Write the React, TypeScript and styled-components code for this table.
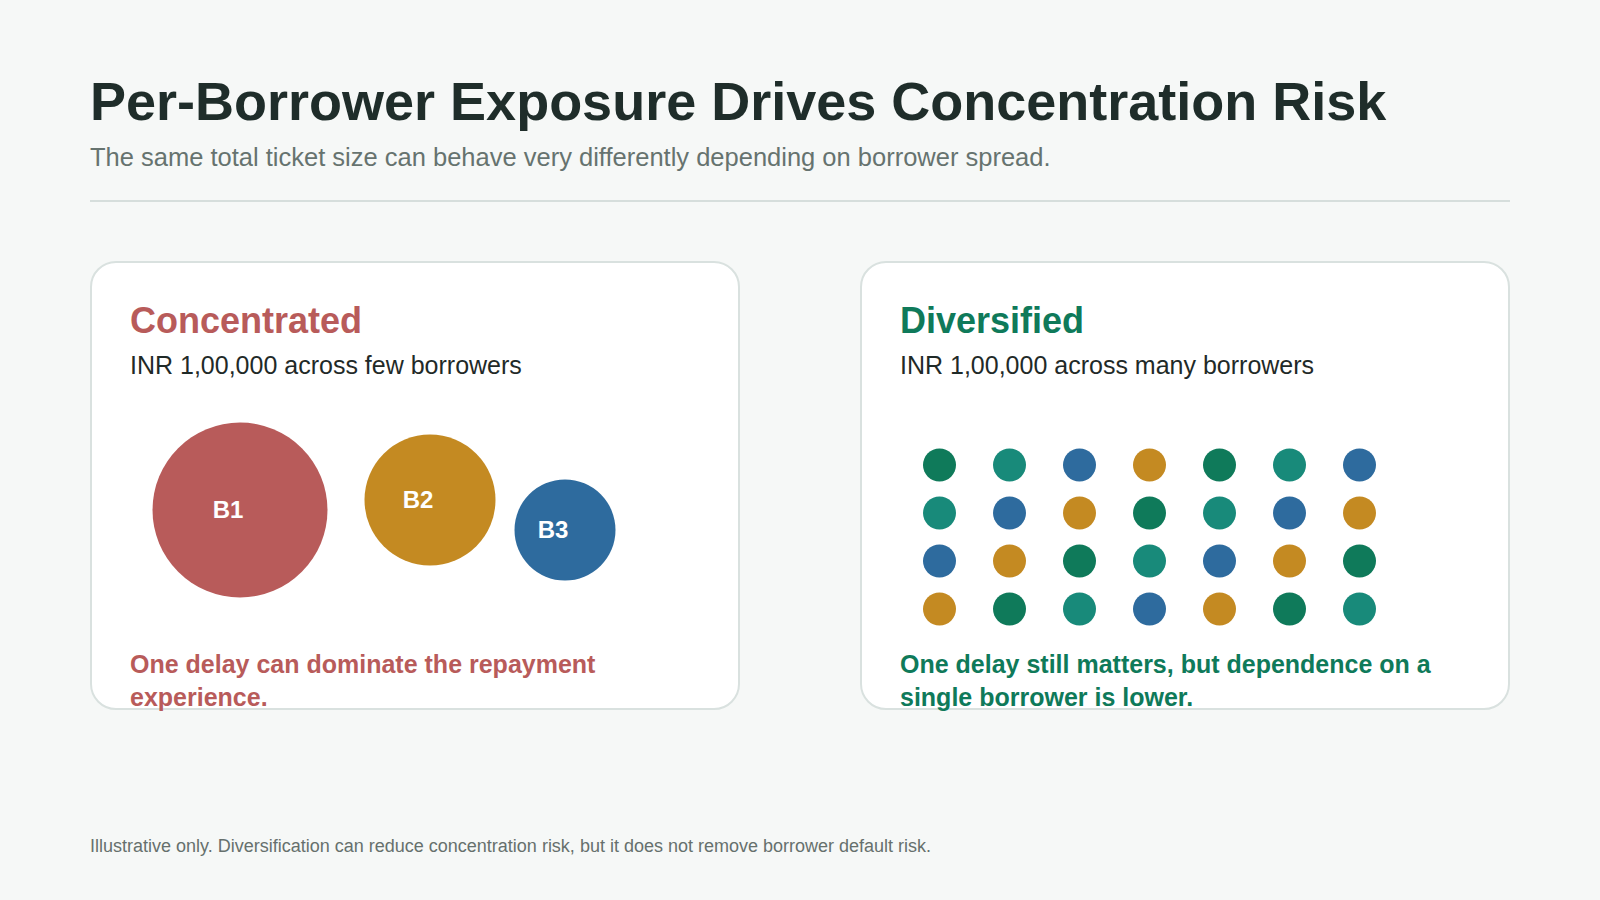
import React from 'react'
import styled, { createGlobalStyle } from 'styled-components'

const GlobalStyle = createGlobalStyle`
  html, body {
    margin: 0;
    padding: 0;
    background: #f6f8f7;
  }
  body {
    font-family: 'Liberation Sans', Arial, sans-serif;
  }
  * {
    box-sizing: border-box;
  }
`

const Page = styled.div`
  width: 1600px;
  height: 900px;
  padding: 72px 90px 0;
  display: flex;
  flex-direction: column;
`

const Title = styled.h1`
  margin: 0;
  font-size: 54px;
  line-height: 58px;
  font-weight: 700;
  color: #1f2d2a;
`

const Subtitle = styled.p`
  margin: 11px 0 0;
  font-size: 25.5px;
  line-height: 32px;
  color: #66736f;
`

const Divider = styled.div`
  margin-top: 27px;
  height: 2px;
  background: #d6dedc;
`

const Cards = styled.div`
  margin-top: 59px;
  display: grid;
  grid-template-columns: 650px 650px;
  column-gap: 120px;
`

const Card = styled.section`
  height: 449px;
  background: #ffffff;
  border: 2px solid #d9e1df;
  border-radius: 26px;
  padding: 37px 38px 0;
  display: flex;
  flex-direction: column;
`

const CardTitle = styled.h2<{ $tone: string }>`
  margin: 0;
  font-size: 36px;
  line-height: 42px;
  font-weight: 700;
  color: ${p => p.$tone};
`

const CardSub = styled.p`
  margin: 8px 0 0;
  font-size: 25px;
  line-height: 30px;
  color: #1f2a28;
`

const Chart = styled.svg`
  display: block;
  width: 100%;
  height: 268px;
  flex: none;
`

const Note = styled.p<{ $tone: string }>`
  margin: 0;
  max-width: 548px;
  font-size: 25px;
  line-height: 32.5px;
  font-weight: 700;
  color: ${p => p.$tone};
`

const Footer = styled.p`
  margin: 126px 0 0;
  font-size: 18px;
  line-height: 20px;
  color: #66706d;
`

const RED = '#b85b5a'
const GOLD = '#c48a22'
const BLUE = '#2e6b9e'
const GREEN = '#0f7a5a'
const TEAL = '#188a7a'

const borrowers = [
  { id: 'B1', cx: 110, cy: 130, r: 87.5, fill: RED },
  { id: 'B2', cx: 300, cy: 120, r: 65.5, fill: GOLD },
  { id: 'B3', cx: 435, cy: 150, r: 50.5, fill: BLUE },
]

const dotColours = [GREEN, TEAL, BLUE, GOLD]

function Bubbles() {
  return (
    <Chart viewBox="0 0 570 268">
      {borrowers.map(b => (
        <g key={b.id}>
          <circle cx={b.cx} cy={b.cy} r={b.r} fill={b.fill} />
          <text
            x={b.cx - 12}
            y={b.cy + 8}
            textAnchor="middle"
            fill="#ffffff"
            fontSize="24"
            fontWeight="700"
            fontFamily="'Liberation Sans', Arial, sans-serif"
          >
            {b.id}
          </text>
        </g>
      ))}
    </Chart>
  )
}

function Dots() {
  const dots = []
  for (let row = 0; row < 4; row++) {
    for (let col = 0; col < 7; col++) {
      dots.push(
        <circle
          key={row + '-' + col}
          cx={39.5 + col * 70}
          cy={85 + row * 48}
          r={16.5}
          fill={dotColours[(row + col) % 4]}
        />
      )
    }
  }
  return <Chart viewBox="0 0 570 268">{dots}</Chart>
}

export default function App() {
  return (
    <>
      <GlobalStyle />
      <Page>
        <Title>Per-Borrower Exposure Drives Concentration Risk</Title>
        <Subtitle>The same total ticket size can behave very differently depending on borrower spread.</Subtitle>
        <Divider />
        <Cards>
          <Card>
            <CardTitle $tone={RED}>Concentrated</CardTitle>
            <CardSub>INR 1,00,000 across few borrowers</CardSub>
            <Bubbles />
            <Note $tone={RED}>One delay can dominate the repayment experience.</Note>
          </Card>
          <Card>
            <CardTitle $tone={GREEN}>Diversified</CardTitle>
            <CardSub>INR 1,00,000 across many borrowers</CardSub>
            <Dots />
            <Note $tone={GREEN}>One delay still matters, but dependence on a single borrower is lower.</Note>
          </Card>
        </Cards>
        <Footer>
          Illustrative only. Diversification can reduce concentration risk, but it does not remove borrower default risk.
        </Footer>
      </Page>
    </>
  )
}
